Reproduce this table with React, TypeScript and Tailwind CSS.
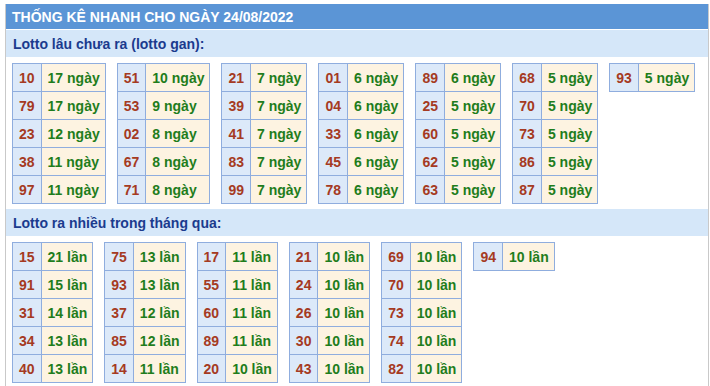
type Row = [string, string];

const GAN: Row[][] = [
  [["10", "17"], ["79", "17"], ["23", "12"], ["38", "11"], ["97", "11"]],
  [["51", "10"], ["53", "9"], ["02", "8"], ["67", "8"], ["71", "8"]],
  [["21", "7"], ["39", "7"], ["41", "7"], ["83", "7"], ["99", "7"]],
  [["01", "6"], ["04", "6"], ["33", "6"], ["45", "6"], ["78", "6"]],
  [["89", "6"], ["25", "5"], ["60", "5"], ["62", "5"], ["63", "5"]],
  [["68", "5"], ["70", "5"], ["73", "5"], ["86", "5"], ["87", "5"]],
  [["93", "5"]],
];

const NHIEU: Row[][] = [
  [["15", "21"], ["91", "15"], ["31", "14"], ["34", "13"], ["40", "13"]],
  [["75", "13"], ["93", "13"], ["37", "12"], ["85", "12"], ["14", "11"]],
  [["17", "11"], ["55", "11"], ["60", "11"], ["89", "11"], ["20", "10"]],
  [["21", "10"], ["24", "10"], ["26", "10"], ["30", "10"], ["43", "10"]],
  [["69", "10"], ["70", "10"], ["73", "10"], ["74", "10"], ["82", "10"]],
  [["94", "10"]],
];

function LotoTable({ rows, unit }: { rows: Row[]; unit: string }) {
  return (
    <div className="grid shrink-0 grid-cols-[auto_auto] whitespace-nowrap border-l border-t border-[#8fadde]">
      {rows.map(([num, count]) => (
        <div key={num} className="contents">
          <div className="flex h-[28px] items-center justify-center border-b border-r border-[#8fadde] bg-[#dce9f9] px-[6px] text-[#a53a22]">
            {num}
          </div>
          <div className="flex h-[28px] items-center border-b border-r border-[#8fadde] bg-[#fdf3e1] pl-[6px] pr-[5px] text-[#1f7d1c]">
            {count} {unit}
          </div>
        </div>
      ))}
    </div>
  );
}

function Section({ title, groups, unit }: { title: string; groups: Row[][]; unit: string }) {
  return (
    <>
      <div className="flex h-[27px] items-center bg-[#d5e7f9] pl-[7px] text-[#1b3b8e]">{title}</div>
      <div className="flex items-start gap-[11px] px-[6px] pb-[5px] pt-[6px]">
        {groups.map((g, i) => (
          <LotoTable key={i} rows={g} unit={unit} />
        ))}
      </div>
    </>
  );
}

export default function App() {
  return (
    <div className="min-h-[386px] bg-white pl-[5px] pr-[1px] pt-[4px] font-['Liberation_Sans',Arial,sans-serif] text-[14px] font-bold leading-none">
      <div className="min-h-[382px] border-x border-[#c9c9c9]">
        <div className="flex h-[25px] items-center bg-[#5b95d6] pl-[6px] text-white">
          THỐNG KÊ NHANH CHO NGÀY 24/08/2022
        </div>
        <div className="pt-px">
          <Section title="Lotto lâu chưa ra (lotto gan):" groups={GAN} unit="ngày" />
        </div>
        <Section title="Lotto ra nhiều trong tháng qua:" groups={NHIEU} unit="lần" />
      </div>
    </div>
  );
}
